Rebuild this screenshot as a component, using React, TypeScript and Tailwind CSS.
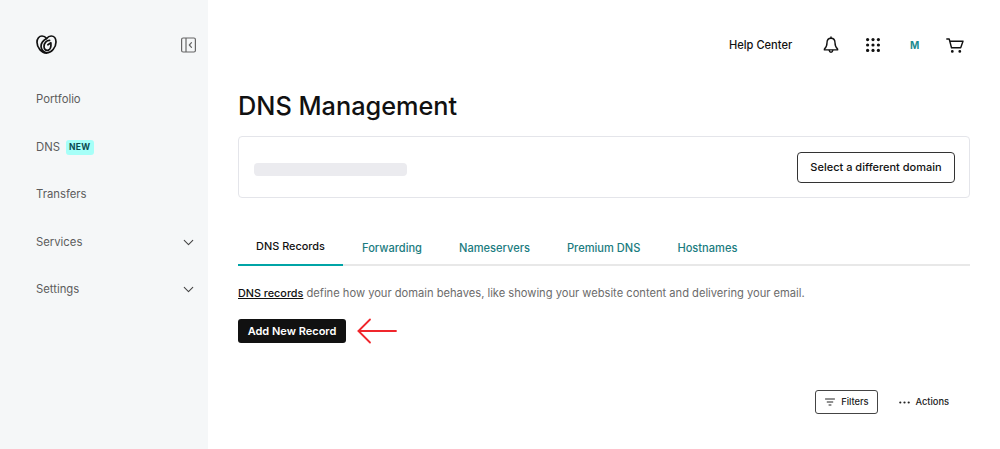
import React from "react";
import { ChevronDown } from "lucide-react";

const font = "font-['Inter','Noto_Sans',sans-serif]";

const Logo = () => (
  <svg width="21" height="19" viewBox="0 0 21 19" fill="none" stroke="#111" strokeWidth="1.7" strokeLinecap="round" strokeLinejoin="round">
    <path d="M10.500 18C5.500 18 1 12.500 1 7.200 1 3.400 3.200 1 6 1c1.800 0 3.500 1 4.600 2.600C11.800 2 13.500 1 15.200 1 18 1 20 3.400 20 7c0 5.500-4.500 11-9.500 11Z" />
    <path d="M10.600 3.600C7.400 5.400 4.800 8.400 5.100 11.800c.3 2.700 2.200 5 5.400 6.200" />
    <path d="M13.600 5.400C10.500 5.400 8 8 8 11.400c0 3 2.300 4.600 4.400 3.700 2.300-1 2.800-4 2.500-7.300l-3 2" />
  </svg>
);

const CollapseIcon = () => (
  <svg width="15" height="16" viewBox="0 0 15 16" fill="none" stroke="#666" strokeWidth="1.2" className="mr-[1px]">
    <rect x=".6" y="1" width="13.800" height="14" rx="1.500" />
    <path d="M5 1v14" />
    <path d="M10.500 5.600 8.300 8l2.200 2.400" strokeLinecap="round" strokeLinejoin="round" />
  </svg>
);

const Bell = () => (
  <svg width="16" height="18" viewBox="0 0 16 18" fill="none" stroke="#111" strokeWidth="1.4" strokeLinejoin="round">
    <path d="M8 2.200C5.200 2.200 4 4.400 4 6.800c0 3.400-1.200 5-2.600 6.200v.9h13.200V13C13.200 11.800 12 10.200 12 6.800c0-2.400-1.200-4.600-4-4.600Z" />
    <path d="M8 1v1.200M6.200 14.400c.2 1.200.9 1.900 1.800 1.900s1.600-.7 1.800-1.900" strokeLinecap="round" />
  </svg>
);

const Dots = () => (
  <svg width="14" height="14" viewBox="0 0 14 14" fill="#111">
    {[1.6, 7, 12.4].flatMap((y) =>
      [1.6, 7, 12.4].map((x) => <circle key={`${x}-${y}`} cx={x} cy={y} r="1.6" />)
    )}
  </svg>
);

const Cart = () => (
  <svg width="18" height="15" viewBox="0 0 18 15" fill="none" stroke="#111" strokeWidth="1.4" strokeLinecap="round" strokeLinejoin="round">
    <path d="M.8 1h2.400l2.300 8.800h9.200L17 3.200H4" />
    <circle cx="6.300" cy="13.400" r=".7" fill="#111" />
    <circle cx="13.800" cy="13.400" r=".7" fill="#111" />
  </svg>
);

const FilterIcon = () => (
  <svg width="10" height="8" viewBox="0 0 10 8" fill="none" stroke="#222" strokeWidth="1" strokeLinecap="round">
    <path d="M.5 1h9M2.200 4h5.600M4 7h2" />
  </svg>
);

const MoreIcon = () => (
  <svg width="11" height="3" viewBox="0 0 11 3" fill="#222">
    <circle cx="1.300" cy="1.500" r="1.100" />
    <circle cx="5.500" cy="1.500" r="1.100" />
    <circle cx="9.700" cy="1.500" r="1.100" />
  </svg>
);

const RedArrow = () => (
  <svg width="40" height="26" viewBox="0 0 40 26" fill="none" stroke="#f0262c" strokeWidth="1.800" strokeLinecap="round" strokeLinejoin="round">
    <path d="M1.500 13H39" />
    <path d="M13 1.500 1.500 13 13 24.500" />
  </svg>
);

const navItems = [
  { label: "Portfolio" },
  { label: "DNS", badge: "NEW" },
  { label: "Transfers" },
  { label: "Services", chevron: true },
  { label: "Settings", chevron: true },
];

const tabs = ["DNS Records", "Forwarding", "Nameservers", "Premium DNS", "Hostnames"];

export default function App() {
  return (
    <div className={`${font} flex h-[449px] w-[1000px] overflow-hidden bg-white`}>
      {/* Sidebar */}
      <aside className="w-[208px] shrink-0 bg-[#f5f7f8] pl-9 pr-[11px]">
        <div className="mt-[35px] flex h-[19px] items-center justify-between">
          <Logo />
          <CollapseIcon />
        </div>
        <nav className="mt-[22px] flex flex-col">
          {navItems.map((item) => (
            <div key={item.label} className="flex h-[47.5px] items-center justify-between text-[11.3px] text-[#5c5c5c]">
              <div className="flex items-center gap-[6px]">
                <span>{item.label}</span>
                {item.badge && (
                  <span className="rounded-[3px] bg-[#a6fff8] px-[3px] py-[1.5px] text-[8.5px] leading-[12px] font-bold tracking-[0.4px] text-[#0b4a50]">
                    {item.badge}
                  </span>
                )}
              </div>
              {item.chevron && <ChevronDown size={17} strokeWidth={1.5} className="text-[#444]" />}
            </div>
          ))}
        </nav>
      </aside>

      {/* Main */}
      <main className="flex-1 pl-[30px] pr-[30px]">
        <header className="mt-[34px] flex h-[22px] items-center pl-[491px] text-[#111]">
          <span className="w-[94px] text-[11.1px] font-medium">Help Center</span>
          <Bell />
          <span className="ml-[27px]"><Dots /></span>
          <span className="ml-[30px] w-[38px] text-[10px] font-bold text-[#1b8a8f]">M</span>
          <span className="-ml-[2px]"><Cart /></span>
        </header>

        <h1 className="mt-[34px] text-[25.3px] leading-[32px] font-medium text-[#111]">DNS Management</h1>

        <section className="mt-[14px] flex h-[62px] items-center justify-between rounded-[4px] border border-[#e4e5ea] pl-[15px] pr-[14px]">
          <div className="mt-[4px] h-[13px] w-[153px] rounded-[4px] bg-[#ebebef]" />
          <button className="mt-[1px] h-[31px] w-[158px] rounded-[4px] border border-[#333] text-[11px] font-medium text-[#111]">
            Select a different domain
          </button>
        </section>

        <div className="mt-[34px] flex h-[34px] border-b-2 border-[#e8e8e8]">
          {tabs.map((tab, i) => (
            <div
              key={tab}
              className={
                i === 0
                  ? "-mb-[2px] mr-[-18px] flex h-[34px] w-[105px] items-center justify-center border-b-2 border-[#00a4a6] pb-[3px] text-[10.9px] font-medium text-[#111]"
                  : "ml-[37px] flex items-center text-[11.1px] font-medium text-[#1b7c80]"
              }
            >
              {tab}
            </div>
          ))}
        </div>

        <p className="mt-[19px] text-[11.15px] leading-[16px] text-[#6b6b6b]">
          <span className="text-[10.8px] font-medium text-[#111] underline">DNS records</span> define how your domain behaves, like showing your website content and delivering your email.
        </p>

        <div className="mt-[16px] flex items-center gap-[11px]">
          <button className="h-[24px] w-[108px] rounded-[3px] bg-[#111] text-[11px] font-semibold text-white">
            Add New Record
          </button>
          <RedArrow />
        </div>

        <div className="mt-[46px] flex items-center justify-end pr-[21px] text-[9.3px] font-medium text-[#222]">
          <button className="flex h-[24px] w-[63px] items-center justify-center gap-[6px] rounded-[3px] border border-[#444]">
            <FilterIcon />
            Filters
          </button>
          <span className="ml-[21px] flex items-center gap-[5px]">
            <MoreIcon />
            Actions
          </span>
        </div>
      </main>
    </div>
  );
}
